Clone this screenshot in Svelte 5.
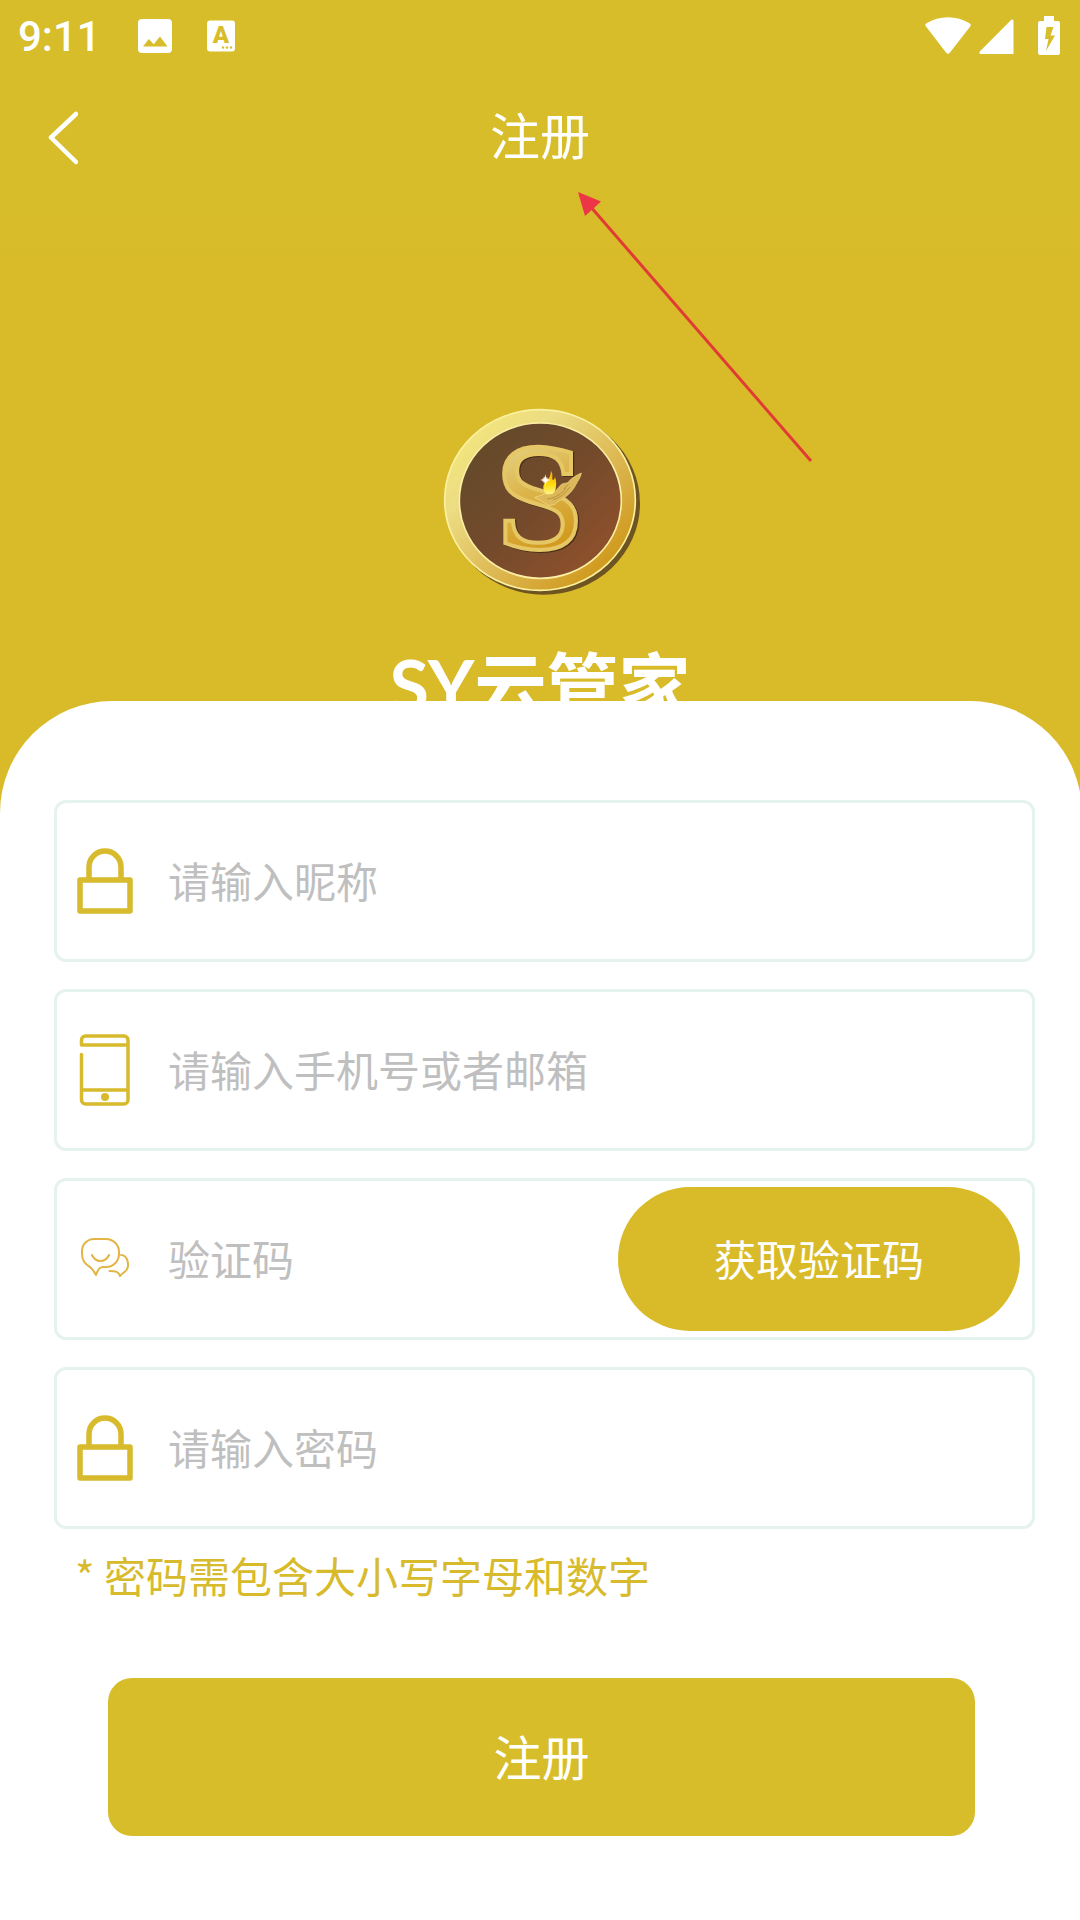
<script>
    let code = ''

    let fields = [
        {
            id: 'nickname',
            icon: 'lock',
            type: 'text',
            placeholder: '请输入昵称',
            value: ''
        },
        {
            id: 'account',
            icon: 'phone',
            type: 'text',
            placeholder: '请输入手机号或者邮箱',
            value: ''
        },
        {
            id: 'code',
            icon: 'chat',
            type: 'text',
            placeholder: '验证码',
            value: ''
        },
        {
            id: 'password',
            icon: 'lock',
            type: 'password',
            placeholder: '请输入密码',
            value: ''
        }
    ]

    function sendCode() {
        code = 'sent'
    }

    function submit(ev) {
        ev.preventDefault()
    }
</script>

<div class="page">
    <div class="top">
        <!--status bar-->
        <div class="status">
            <span class="time">9:11</span>
            <svg class="photo" width="34" height="34" viewBox="0 0 34 34">
                <path fill="#fff" fill-rule="evenodd" d="M4 0h26a4 4 0 0 1 4 4v26a4 4 0 0 1-4 4H4a4 4 0 0 1-4-4V4a4 4 0 0 1 4-4zM5 27.500h24.500L22 17.500l-6.300 7.800-4.900-5.300z"/>
            </svg>
            <svg width="28" height="32" viewBox="0 0 28 32">
                <rect width="28" height="31" y="0.500" rx="3" fill="#fff"/>
                <text x="14" y="23" text-anchor="middle" class="badge">A</text>
                <circle cx="16" cy="27.500" r="1.200" fill="#d6bd29"/>
                <circle cx="20" cy="27.500" r="1.200" fill="#d6bd29"/>
                <circle cx="24" cy="27.500" r="1.200" fill="#d6bd29"/>
            </svg>
            <div class="signals">
                <svg width="46" height="38" viewBox="0 0 46 38">
                    <path fill="#fff" d="M1 9.500C-0.200 8.300 0 7.200 1.500 6.200 14-1.800 32-1.800 44.500 6.200c1.500 1 1.700 2.100.7 3.300L24.800 35.800c-1 1.300-2.600 1.300-3.600 0z"/>
                </svg>
                <svg width="35" height="38" viewBox="0 0 35 38">
                    <path fill="#fff" d="M1 34.300 31.800 3.200c1.300-1.200 2.700-.6 2.700 1.200V37H2c-1.900 0-2.300-1.400-1-2.700z"/>
                </svg>
                <svg class="battery" width="22" height="40" viewBox="0 0 22 40">
                    <path fill="#fff" fill-rule="evenodd" d="M6 0h10v5h4a2 2 0 0 1 2 2v30a2 2 0 0 1-2 2H2a2 2 0 0 1-2-2V7a2 2 0 0 1 2-2h4zM8.500 11 7 23h3.500L8 35l9-15.500h-4.500L15.500 11z"/>
                </svg>
            </div>
        </div>

        <!--nav bar-->
        <div class="nav">
            <button class="back" aria-label="返回">
                <svg width="30" height="54" viewBox="0 0 30 54">
                    <path d="M28 3 3 26.500 28 51" fill="none" stroke="#fff" stroke-width="4.500" stroke-linecap="round" stroke-linejoin="round"/>
                </svg>
            </button>
            <span class="title">注册</span>
        </div>

        <div class="brand">
            <svg width="220" height="210" viewBox="0 0 660 630">
                <defs>
                    <linearGradient id="rim" x1="0" y1="0" x2="1" y2="1">
                        <stop offset="0.100" stop-color="#f4e67c"/>
                        <stop offset="0.300" stop-color="#ecdc83"/>
                        <stop offset="0.600" stop-color="#dcb650"/>
                        <stop offset="0.850" stop-color="#d09a1e"/>
                    </linearGradient>
                    <linearGradient id="face" x1="0" y1="0" x2="1" y2="1">
                        <stop offset="0.100" stop-color="#634a2a"/>
                        <stop offset="0.500" stop-color="#734a2b"/>
                        <stop offset="0.900" stop-color="#91512c"/>
                    </linearGradient>
                    <linearGradient id="gold" x1="0" y1="0" x2="0.300" y2="1">
                        <stop offset="0.200" stop-color="#e3d080"/>
                        <stop offset="0.500" stop-color="#dcb54b"/>
                        <stop offset="0.900" stop-color="#d29a1f"/>
                    </linearGradient>
                    <linearGradient id="fire" x1="0" y1="0" x2="0" y2="1">
                        <stop offset="0" stop-color="#f6a500"/>
                        <stop offset="0.600" stop-color="#ffdc10"/>
                        <stop offset="1" stop-color="#fff38a"/>
                    </linearGradient>
                </defs>
                <ellipse cx="341" cy="325" rx="289" ry="274" fill="#6d5420"/>
                <ellipse cx="330" cy="315" rx="286" ry="271" fill="url(#rim)" stroke="#fbf1a0" stroke-width="5"/>
                <ellipse cx="331" cy="317" rx="243" ry="233" fill="url(#face)" stroke="#fbefa4" stroke-width="5"/>
                <text x="332" y="463" text-anchor="middle" class="mark shade">S</text>
                <text x="328" y="459" text-anchor="middle" class="mark">S</text>
                <!--hand-->
                <path d="M314 307c16-3 24-11 40-11 14 0 23-6 36-24 10-11 20-4 26-12 9-12 24-19 38-26-2 13-10 23-16 34-8 17-20 30-36 41-10 8-18 8-26 18l-18 5z" fill="#dcb85a" stroke="#f5df8a" stroke-width="2"/>
                <path d="M352 312c24-2 42-16 56-32M370 314c22-6 38-22 50-38M414 268l-12 14" fill="none" stroke="#a97b2c" stroke-width="2"/>
                <!--flame-->
                <path d="M363 227c8 12 1 21 6 29 4-3 5-6 6-10 5 13 4 24 2 35-2 12-9 17-19 17-12 0-18-8-18-20 0-11 6-14 12-22 7-9 10-17 11-29z" fill="url(#fire)"/>
                <circle cx="346" cy="255" r="9" fill="#fff6c9" opacity="0.700"/>
                <path d="m346 238 3 14 13 3-13 3-3 14-3-14-13-3 13-3z" fill="#fff"/>
            </svg>
            <h1>SY云管家</h1>
        </div>
    </div>

    <form class="sheet" on:submit={submit}>
        <div class="fields">
            {#each fields as field }
            <div class="field">
                <label for={field.id} aria-label={field.placeholder}>
                    <svg width="56" height="72" viewBox="0 0 56 72" fill="none" stroke="#d8bb2c" stroke-linecap="round" stroke-linejoin="round">
                        {#if field.icon === 'lock'}
                        <path d="M12 34V22a16 16 0 0 1 32 0v12" stroke-width="5.500"/>
                        <path d="M3 35h50v31H3z" stroke-width="5.500"/>
                        {:else if field.icon === 'phone'}
                        <path d="M4.500 20.500V66a4 4 0 0 0 4 4H47a4 4 0 0 0 4-4V6a4 4 0 0 0-4-4H8.500a4 4 0 0 0-4 4v5H51M4.500 56H51" stroke-width="3.500"/>
                        <circle cx="28" cy="63" r="4" fill="#d8bb2c" stroke="none"/>
                        {:else}
                        <path d="M17 16h12a13 13 0 0 1 13 13v2a13 13 0 0 1-13 13h-3c-4 0-5.500 3-7 8-1.500-2.500-3-5.500-6-8C7.500 41 5 37 5 31v-3a12 12 0 0 1 12-12zM15 32c3.500 8 13.500 8 17 0M44 32c7 0 8.500 11 5.500 15-2 2.500-4 3-6.500 6-1.500-4.500-4-5-10.500-5" stroke="#e2b544" stroke-width="2"/>
                        {/if}
                    </svg>
                </label>
                <input id={field.id} type={field.type} placeholder={field.placeholder} bind:value={field.value}>
                {#if field.id === 'code'}
                <button type="button" class="send" data-state={code} on:click={sendCode}>获取验证码</button>
                {/if}
            </div>
            {/each}
        </div>
        <p class="hint">* 密码需包含大小写字母和数字</p>
        <button class="submit">注册</button>
    </form>

    <!--pointer to the page title-->
    <svg class="arrow" width="240" height="274" viewBox="0 0 240 274">
        <path d="M14 16 235 271" stroke="#e03b35" stroke-width="3"/>
        <path d="M2 2 25 11.500 9 26z" fill="#ec3546"/>
    </svg>
</div>

<style>
    :global(body) {
        margin: 0;
        background: #fff;
    }
    .page {
        position: relative;
        overflow: hidden;
        font-family: "Noto Sans CJK SC", sans-serif;
        font-size: 42px;
    }
    button, input {
        box-sizing: border-box;
        font: inherit;
        border: 0;
        padding: 0 0 4px;
        background: none;
    }
    svg {
        display: block;
        flex: none;
    }
    .top {
        background: linear-gradient(#d6bd29 160px, #d9bb29 260px);
        color: #fff;
    }

    .status {
        display: flex;
        align-items: center;
        height: 72px;
        padding: 0 20px 0 18px;
    }
    .time {
        margin-right: 37px;
        font-family: Roboto, sans-serif;
        font-weight: 500;
    }
    .photo {
        margin-right: 35px;
    }
    .badge {
        font: 900 24px Roboto, sans-serif;
        fill: #d6bd29;
    }
    .signals {
        display: flex;
        align-items: center;
        gap: 8px;
        margin-left: auto;
    }
    .battery {
        margin-left: 16px;
    }

    .nav {
        display: grid;
        grid-template-columns: 128px 1fr 128px;
        align-items: center;
        height: 132px;
    }
    .back {
        height: 100%;
        padding: 0 0 0 48px;
    }
    .title {
        text-align: center;
        font-size: 50px;
        line-height: 72px;
        padding-bottom: 10px;
    }

    .brand {
        display: flex;
        flex-direction: column;
        align-items: center;
        gap: 30px;
        padding: 191px 0 80px;
    }
    .mark {
        font: 408px "DejaVu Serif", serif;
        fill: url(#gold);
        stroke: #e6c765;
        stroke-width: 12px;
    }
    .shade {
        fill: #4a2f18;
        stroke: #4a2f18;
    }
    h1 {
        margin: 0;
        font: bold 72px/100px Lato, "Noto Sans CJK SC", sans-serif;
    }

    .sheet {
        position: relative;
        margin: -114px -2px 0 0;
        padding: 99px 47px 84px 54px;
        border-radius: 112px 112px 0 0;
        background: #fff;
    }
    .fields {
        display: flex;
        flex-direction: column;
        gap: 27px;
    }
    .field {
        display: flex;
        align-items: center;
        gap: 35px;
        height: 156px;
        padding: 0 12px 0 20px;
        border: 3px solid #e6f2ef;
        border-radius: 12px;
    }
    input {
        flex: 1;
        min-width: 0;
        height: 100%;
        outline: none;
        color: #333;
    }
    input::placeholder {
        color: #bfbfbf;
        opacity: 1;
    }
    .send {
        width: 402px;
        height: 144px;
        border-radius: 72px;
        background: #d9bb29;
        color: #fff;
    }
    .hint {
        margin: 16px 21px 0;
        line-height: 60px;
        color: #d8bb2c;
    }
    .submit {
        display: block;
        width: calc(100% - 114px);
        height: 158px;
        margin: 73px 0 0 54px;
        border-radius: 24px;
        background: #d6bd29;
        color: #fff;
        font-size: 48px;
    }

    .arrow {
        position: absolute;
        top: 190px;
        left: calc(50% + 36px);
    }
</style>
